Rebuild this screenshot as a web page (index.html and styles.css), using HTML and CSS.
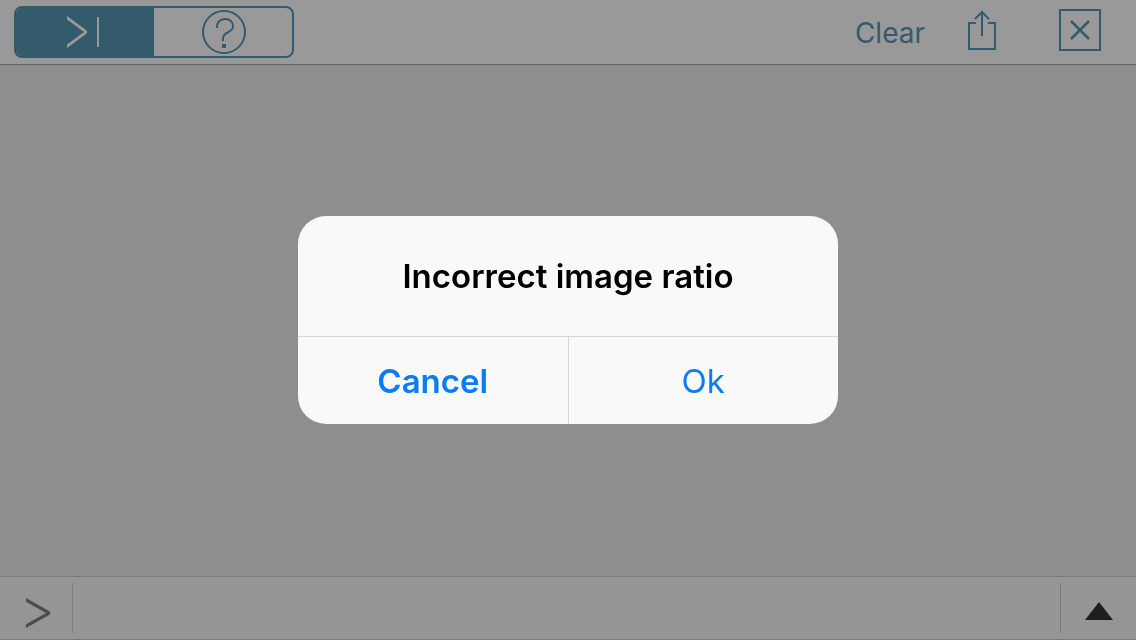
FILE: index.html
```html
<!DOCTYPE html>
<html lang="en">
<head>
  <meta charset="UTF-8" />
  <meta name="viewport" content="width=device-width, initial-scale=1.0" />
  <title>Console</title>
  <link rel="stylesheet" href="styles.css">
</head>
<body>
  <div class="app">
    <header class="toolbar">
      <div class="tabs">
        <button class="tab active" aria-label="Console">
          <svg width="38" height="32" viewBox="0 0 38 32" fill="currentColor">
            <path d="M1 0 L21 14.8 V17.2 L1 32 V28.4 L18 16 L1 3.6 Z" />
            <path d="M31 1 H33 V31 H31 Z" />
          </svg>
        </button>
        <button class="tab" aria-label="Help">
          <svg width="44" height="44" viewBox="0 0 44 44" fill="none" stroke="currentColor" stroke-width="2">
            <circle cx="22" cy="22" r="21" />
            <path d="M15 18 C15 12 18 9 23 9 C28 9 31 12 31 16.5 C31 22.5 21 22 21 28 V31" />
            <path d="M22 34 V38" stroke-width="4" />
          </svg>
        </button>
      </div>
      <div class="actions">
        <button class="clear">Clear</button>
        <button class="share" aria-label="Share">
          <svg width="28" height="42" viewBox="0 0 28 42" fill="none" stroke="currentColor" stroke-width="2">
            <path d="M8 14 H1 V40 H27 V14 H20" />
            <path d="M14 27 V3 M7 10 L14 3 L21 10" />
          </svg>
        </button>
        <button class="close" aria-label="Close">
          <svg width="42" height="42" viewBox="0 0 42 42" fill="none" stroke="currentColor" stroke-width="2">
            <rect x="1" y="1" width="40" height="40" />
            <path d="M12 12 L30 30 M30 12 L12 30" stroke-width="2.6" />
          </svg>
        </button>
      </div>
    </header>

    <main class="output"></main>

    <footer class="prompt">
      <label class="prompt-sign" for="command" aria-label="Command">
        <svg width="26" height="30" viewBox="0 0 26 30" fill="currentColor">
          <path d="M1 0 L25 13.6 V16.4 L1 30 V26.2 L21 15 L1 3.8 Z" />
        </svg>
      </label>
      <input type="text" id="command" class="command">
      <button class="expand" aria-label="Expand">
        <svg width="28" height="18" viewBox="0 0 28 18" fill="currentColor">
          <path d="M14 0 L28 18 H0 Z" />
        </svg>
      </button>
    </footer>
  </div>

  <div class="overlay">
    <div class="alert" role="alertdialog" aria-modal="true" aria-labelledby="alert-title">
      <h1 id="alert-title">Incorrect image ratio</h1>
      <div class="alert-buttons">
        <button class="cancel">Cancel</button>
        <button>Ok</button>
      </div>
    </div>
  </div>
</body>
</html>
```

FILE: styles.css
```css
* {
  box-sizing: border-box;
}
body {
  margin: 0;
  font-family: Inter, "Liberation Sans", sans-serif;
}
button {
  margin: 0;
  padding: 0;
  border: none;
  background: none;
  font-family: inherit;
  color: inherit;
  cursor: pointer;
}
svg {
  display: block;
}
.app {
  display: flex;
  flex-direction: column;
  min-height: 100vh;
  background-color: #ededed;
}

/* top bar */
.toolbar {
  display: flex;
  justify-content: space-between;
  align-items: flex-start;
  padding: 6px 35px 6px 14px;
  background-color: #fff;
  border-bottom: 1px solid #a8a8a8;
  color: #5898b2;
}
.tabs {
  display: flex;
  width: 280px;
  height: 52px;
  border: 2px solid #5898b2;
  border-radius: 8px;
  overflow: hidden;
}
.tab {
  display: flex;
  width: 50%;
  justify-content: center;
  align-items: center;
  padding-left: 2px;
}
.tab.active {
  padding-left: 0;
  background-color: #5898b2;
  color: #fff;
}
.actions {
  display: flex;
  align-items: center;
  height: 48px;
}
.clear {
  margin-right: 43px;
  padding-top: 6px;
  font-size: 28px;
  line-height: 36px;
}
.share {
  margin-right: 63px;
}

.output {
  flex: 1;
}

/* command line */
.prompt {
  display: flex;
  padding: 6px 0;
  background-color: #f9f9f9;
  border-top: 1px solid #cdcdcd;
  border-bottom: 1px solid #cdcdcd;
}
.prompt-sign,
.expand {
  display: flex;
  justify-content: center;
  align-items: center;
  height: 50px;
}
.prompt-sign {
  width: 73px;
  padding-top: 10px;
  padding-left: 4px;
  border-right: 1px solid #cdcdcd;
  color: #808080;
}
.command {
  flex: 1;
  min-width: 0;
  padding: 0 12px;
  border: none;
  outline: none;
  background: none;
  font-family: inherit;
  font-size: 28px;
}
.expand {
  width: 76px;
  padding-top: 6px;
  border-left: 1px solid #cdcdcd;
  color: #333;
}

/* alert */
.overlay {
  position: fixed;
  inset: 0;
  display: flex;
  justify-content: center;
  align-items: center;
  padding: 16px;
  background-color: rgba(0, 0, 0, 0.4);
}
.alert {
  width: 100%;
  max-width: 540px;
  background-color: #f9f9f9;
  border-radius: 28px;
  overflow: hidden;
}
.alert h1 {
  margin: 0;
  padding: 40px 32px;
  font-size: 33px;
  font-weight: 600;
  line-height: 40px;
  text-align: center;
  color: #000;
}
.alert-buttons {
  display: flex;
  border-top: 1px solid #d6d6da;
}
.alert-buttons button {
  flex: 1;
  height: 87px;
  font-size: 33px;
  line-height: 40px;
  color: #087cfa;
}
.alert-buttons .cancel {
  border-right: 1px solid #d6d6da;
  font-weight: 600;
}
```
